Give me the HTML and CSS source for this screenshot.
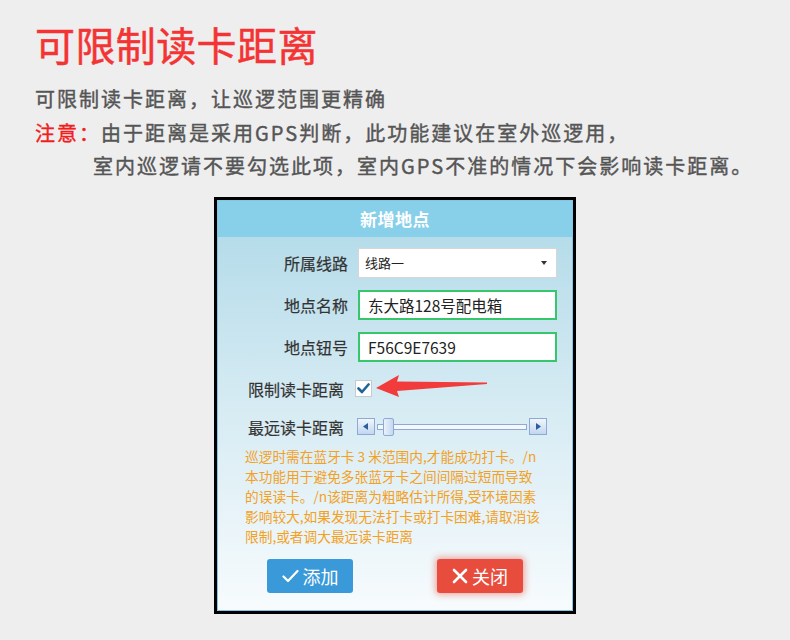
FILE: index.html
```html
<!DOCTYPE html>
<html lang="zh-CN">
<head>
<meta charset="utf-8">
<title>可限制读卡距离</title>
<link rel="stylesheet" href="styles.css">
</head>
<body>
<div class="page">
  <h1 class="title">可限制读卡距离</h1>
  <p class="line">可限制读卡距离，让巡逻范围更精确</p>
  <p class="line"><span class="note">注意：</span>由于距离是采用GPS判断，此功能建议在室外巡逻用，</p>
  <p class="line indent">室内巡逻请不要勾选此项，室内GPS不准的情况下会影响读卡距离。</p>

  <div class="dialog">
    <div class="dialog-inner">
      <div class="dlg-head">新增地点</div>
      <div class="dlg-body">
        <div class="row">
          <span class="lbl">所属线路</span>
          <div class="field select"><span>线路一</span><span class="caret"></span></div>
        </div>
        <div class="row">
          <span class="lbl">地点名称</span>
          <div class="field input">东大路128号配电箱</div>
        </div>
        <div class="row">
          <span class="lbl">地点钮号</span>
          <div class="field input">F56C9E7639</div>
        </div>
        <div class="row row-check">
          <span class="lbl2">限制读卡距离</span>
          <span class="checkbox">
            <svg width="13" height="11" viewBox="0 0 13 11"><path d="M1.5 5.5 L5 9 L11.5 1.5" fill="none" stroke="#1d6497" stroke-width="2.6" stroke-linecap="round" stroke-linejoin="round"/></svg>
          </span>
          <svg class="arrow" width="112" height="24" viewBox="0 0 112 24"><polygon points="0,14 23,1 21,7.5 111,8.6 111,10 21,17 23,23" fill="#f23b3b"/></svg>
        </div>
        <div class="row row-slider">
          <span class="lbl2">最远读卡距离</span>
          <div class="slider">
            <span class="sbtn"><svg width="6" height="7" viewBox="0 0 6 7"><polygon points="5,0 5,7 0,3.5" fill="#2d5e9e"/></svg></span>
            <span class="track"><span class="thumb"></span></span>
            <span class="sbtn"><svg width="6" height="7" viewBox="0 0 6 7"><polygon points="1,0 1,7 6,3.5" fill="#2d5e9e"/></svg></span>
          </div>
        </div>
        <p class="hint">巡逻时需在蓝牙卡 3 米范围内,才能成功打卡。/n<br>本功能用于避免多张蓝牙卡之间间隔过短而导致<br>的误读卡。/n该距离为粗略估计所得,受环境因素<br>影响较大,如果发现无法打卡或打卡困难,请取消该<br>限制,或者调大最远读卡距离</p>
        <div class="actions">
          <button class="btn btn-add"><svg width="17" height="14" viewBox="0 0 17 14"><path d="M1.5 7.5 L6 12 L15.5 2" fill="none" stroke="#fff" stroke-width="2.2" stroke-linecap="round" stroke-linejoin="round"/></svg>添加</button>
          <button class="btn btn-close"><svg width="16" height="16" viewBox="0 0 16 16"><path d="M2 2 L14 14 M14 2 L2 14" fill="none" stroke="#fff" stroke-width="2.6" stroke-linecap="round"/></svg>关闭</button>
        </div>
      </div>
    </div>
  </div>
</div>
</body>
</html>
```
FILE: styles.css
```css
html, body {
  margin: 0;
  padding: 0;
}
body {
  background: #eeeeee;
  font-family: "Noto Sans CJK SC", "Noto Sans", sans-serif;
  width: 790px;
  height: 640px;
  overflow: hidden;
}
.page {
  padding: 24px 0 0 35px;
}
.title {
  margin: 0 0 18px;
  font-size: 40px;
  line-height: 40px;
  font-weight: normal;
  -webkit-text-stroke: 0.5px #f43434;
  color: #f43434;
  letter-spacing: 0.4px;
}
.line {
  margin: 0;
  font-size: 20px;
  line-height: 33.5px;
  font-weight: normal;
  -webkit-text-stroke: 0.4px currentColor;
  color: #555555;
  letter-spacing: 2px;
  white-space: nowrap;
}
.note {
  color: #f21d1d;
}
.indent {
  padding-left: 58px;
}
.dialog {
  width: 362px;
  box-sizing: border-box;
  border: 3px solid #000;
  margin: 14px 0 0 179px;
}
.dialog-inner {
  border: 1px solid #7fc8e8;
}
.dlg-head {
  height: 36px;
  background: #88cfea;
  color: #fff;
  font-size: 17px;
  font-weight: bold;
  line-height: 36px;
  text-align: center;
  letter-spacing: 0.5px;
}
.dlg-body {
  background: linear-gradient(#b6dcea, #d6ebf3 45%, #f7fbfd);
  padding: 11px 0 17px;
}
.row {
  display: flex;
  align-items: center;
  height: 30px;
  margin-bottom: 12px;
  position: relative;
}
.lbl {
  width: 130px;
  margin-right: 10px;
  text-align: right;
  font-size: 16px;
  color: #333;
  -webkit-text-stroke: 0.2px #333;
}
.lbl2 {
  margin-left: 30px;
  width: 96px;
  margin-right: 11px;
  font-size: 16px;
  color: #333;
  -webkit-text-stroke: 0.2px #333;
}
.field {
  width: 199px;
  height: 30px;
  box-sizing: border-box;
  background: #fff;
  display: flex;
  align-items: center;
}
.select {
  border: 1px solid #d6d6d6;
  padding: 0 9px 0 6px;
  font-size: 13px;
  color: #222;
  justify-content: space-between;
}
.caret {
  width: 0;
  height: 0;
  border-left: 3.5px solid transparent;
  border-right: 3.5px solid transparent;
  border-top: 4px solid #333;
}
.input {
  border: 2px solid #36c66c;
  padding-left: 8px;
  font-size: 15.5px;
  color: #222;
}
.row-check {
  margin-bottom: 8px;
}
.checkbox {
  width: 17px;
  height: 17px;
  box-sizing: border-box;
  border: 1px solid #c9c9c9;
  background: #fff;
  display: flex;
  align-items: center;
  justify-content: center;
}
.arrow {
  position: absolute;
  left: 158px;
  top: 0;
}
.row-slider {
  margin-bottom: 4px;
}
.slider {
  display: flex;
  align-items: center;
  margin-left: 2px;
}
.sbtn {
  width: 18px;
  height: 17px;
  box-sizing: border-box;
  border: 1px solid #8eaad4;
  background: linear-gradient(#f0f6fd, #c2d7f0);
  display: flex;
  align-items: center;
  justify-content: center;
}
.track {
  width: 150px;
  height: 6px;
  box-sizing: border-box;
  border: 1px solid #8eaad4;
  background: #f4f8fc;
  margin: 0 2px;
  position: relative;
}
.thumb {
  position: absolute;
  left: 5px;
  top: -7px;
  width: 11px;
  height: 18px;
  box-sizing: border-box;
  border: 1px solid #8eaad4;
  border-radius: 2px;
  background: linear-gradient(90deg, #eaf2fb, #c4d8ef);
}
.hint {
  margin: 0 0 13px 27px;
  font-size: 13.7px;
  line-height: 20px;
  color: #f3a11f;
  white-space: nowrap;
}
.actions {
  display: flex;
  gap: 84px;
  padding-left: 49px;
}
.btn {
  width: 86px;
  height: 34px;
  border: none;
  border-radius: 3px;
  color: #fff;
  font-family: "Noto Sans CJK SC", sans-serif;
  font-size: 18px;
  display: flex;
  align-items: center;
  justify-content: center;
  gap: 4px;
  padding: 0;
}
.btn-add {
  background: #3a99d9;
}
.btn-close {
  background: #e84c3d;
  box-shadow: 0 0 6px 2px rgba(232, 76, 61, 0.45);
}
```
